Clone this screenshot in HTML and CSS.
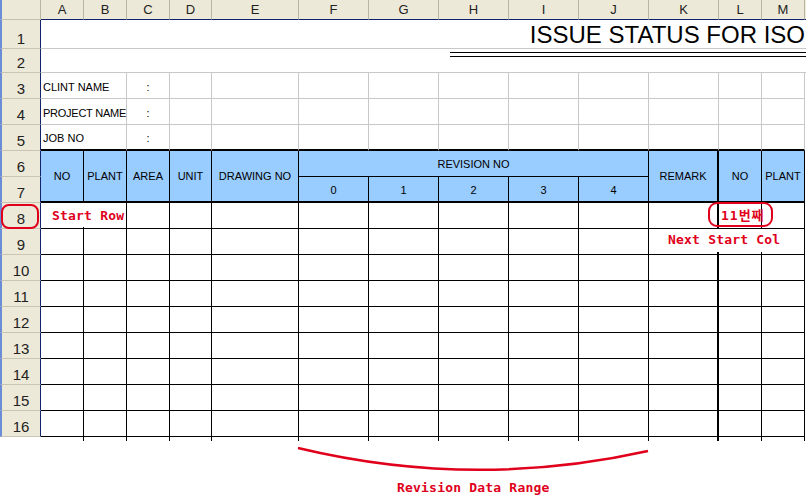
FILE: index.html
```html
<!DOCTYPE html>
<html lang="ko">
<head>
<meta charset="utf-8">
<title>ISSUE STATUS FOR ISO</title>
<link rel="stylesheet" href="styles.css">
</head>
<body>
<div class="sheet">
  <div class="grid">
    <div class="ch corner"></div>
    <div class="ch">A</div><div class="ch">B</div><div class="ch">C</div><div class="ch">D</div><div class="ch">E</div><div class="ch">F</div><div class="ch">G</div><div class="ch">H</div><div class="ch">I</div><div class="ch">J</div><div class="ch">K</div><div class="ch">L</div><div class="ch">M</div><div class="ch chn"></div>

    <div class="rh">1</div>
    <div class="title">ISSUE STATUS FOR ISO</div>

    <div class="rh">2</div>
    <div class="r2"><div class="dbl"></div></div>

    <div class="rh">3</div>
    <div class="g ab lbl">CLINT NAME</div><div class="g colon">:</div>
    <div class="g"></div><div class="g"></div><div class="g"></div><div class="g"></div><div class="g"></div><div class="g"></div><div class="g"></div><div class="g"></div><div class="g"></div><div class="g"></div><div class="n"></div>

    <div class="rh">4</div>
    <div class="g ab lbl tight">PROJECT NAME</div><div class="g colon">:</div>
    <div class="g"></div><div class="g"></div><div class="g"></div><div class="g"></div><div class="g"></div><div class="g"></div><div class="g"></div><div class="g"></div><div class="g"></div><div class="g"></div><div class="n"></div>

    <div class="rh">5</div>
    <div class="g b5 ab lbl">JOB NO</div><div class="g b5 colon">:</div>
    <div class="g b5"></div><div class="g b5"></div><div class="g b5"></div><div class="g b5"></div><div class="g b5"></div><div class="g b5"></div><div class="g b5"></div><div class="g b5"></div><div class="g b5"></div><div class="g b5"></div><div class="n"></div>

    <div class="rh">6</div>
    <div class="h tall">NO</div><div class="h tall">PLANT</div><div class="h tall">AREA</div><div class="h tall">UNIT</div><div class="h tall">DRAWING NO</div>
    <div class="h rev">REVISION NO</div>
    <div class="h tall k">REMARK</div><div class="h tall">NO</div><div class="h tall">PLANT</div><div class="n tall-n"></div>

    <div class="rh">7</div>
    <div class="h low">0</div><div class="h low">1</div><div class="h low">2</div><div class="h low">3</div><div class="h low">4</div>

    <div class="rh">8</div>
    <div class="d"></div><div class="d"></div><div class="d"></div><div class="d"></div><div class="d"></div><div class="d"></div><div class="d"></div><div class="d"></div><div class="d"></div><div class="d"></div><div class="d k"></div><div class="d"></div><div class="d"></div><div class="n"></div>
    <div class="rh">9</div>
    <div class="d"></div><div class="d"></div><div class="d"></div><div class="d"></div><div class="d"></div><div class="d"></div><div class="d"></div><div class="d"></div><div class="d"></div><div class="d"></div><div class="d k"></div><div class="d"></div><div class="d"></div><div class="n"></div>
    <div class="rh">10</div>
    <div class="d"></div><div class="d"></div><div class="d"></div><div class="d"></div><div class="d"></div><div class="d"></div><div class="d"></div><div class="d"></div><div class="d"></div><div class="d"></div><div class="d k"></div><div class="d"></div><div class="d"></div><div class="n"></div>
    <div class="rh">11</div>
    <div class="d"></div><div class="d"></div><div class="d"></div><div class="d"></div><div class="d"></div><div class="d"></div><div class="d"></div><div class="d"></div><div class="d"></div><div class="d"></div><div class="d k"></div><div class="d"></div><div class="d"></div><div class="n"></div>
    <div class="rh">12</div>
    <div class="d"></div><div class="d"></div><div class="d"></div><div class="d"></div><div class="d"></div><div class="d"></div><div class="d"></div><div class="d"></div><div class="d"></div><div class="d"></div><div class="d k"></div><div class="d"></div><div class="d"></div><div class="n"></div>
    <div class="rh">13</div>
    <div class="d"></div><div class="d"></div><div class="d"></div><div class="d"></div><div class="d"></div><div class="d"></div><div class="d"></div><div class="d"></div><div class="d"></div><div class="d"></div><div class="d k"></div><div class="d"></div><div class="d"></div><div class="n"></div>
    <div class="rh">14</div>
    <div class="d"></div><div class="d"></div><div class="d"></div><div class="d"></div><div class="d"></div><div class="d"></div><div class="d"></div><div class="d"></div><div class="d"></div><div class="d"></div><div class="d k"></div><div class="d"></div><div class="d"></div><div class="n"></div>
    <div class="rh">15</div>
    <div class="d"></div><div class="d"></div><div class="d"></div><div class="d"></div><div class="d"></div><div class="d"></div><div class="d"></div><div class="d"></div><div class="d"></div><div class="d"></div><div class="d k"></div><div class="d"></div><div class="d"></div><div class="n"></div>
    <div class="rh">16</div>
    <div class="d"></div><div class="d"></div><div class="d"></div><div class="d"></div><div class="d"></div><div class="d"></div><div class="d"></div><div class="d"></div><div class="d"></div><div class="d"></div><div class="d k"></div><div class="d"></div><div class="d"></div><div class="n"></div>

    <div class="n"></div>
    <div class="t"></div><div class="t"></div><div class="t"></div><div class="t"></div><div class="t"></div><div class="t"></div><div class="t"></div><div class="t"></div><div class="t"></div><div class="t"></div><div class="t k"></div><div class="t"></div><div class="t"></div><div class="n"></div>
  </div>

  <div class="rowmark"></div>
  <div class="ann start-row">Start Row</div>
  <div class="ann eleven">11번째</div>
  <div class="ann next-col">Next Start Col</div>
  <svg class="bracket" width="806" height="504" viewBox="0 0 806 504">
    <path d="M298 448 Q 473 490 648 451" fill="none" stroke="#e0001b" stroke-width="2.5"/>
  </svg>
  <div class="ann range">Revision Data Range</div>
</div>
</body>
</html>
```

FILE: styles.css
```css
* { box-sizing: border-box; }
html, body { margin: 0; padding: 0; background: #fff; }
body {
  width: 806px;
  height: 504px;
  overflow: hidden;
  font-family: "Liberation Sans", Arial, sans-serif;
  color: #000;
}
.sheet { position: relative; width: 806px; height: 504px; }

.grid {
  display: grid;
  grid-template-columns: 41px 43px 43px 43px 42px 87px 70px 70px 70px 70px 70px 70px 43px 43px 1fr;
  grid-template-rows: 20px 29px 24px repeat(14, 26px) 4px;
}

/* column headers */
.ch {
  background: #ece9d8;
  border-right: 1px solid #b9b5a3;
  border-bottom: 1px solid #12236e;
  font-size: 13px;
  line-height: 19px;
  text-align: center;
  color: #222;
}
.ch.corner {
  border-left: 2px solid #6b8cd6;
  border-bottom-color: #c4c0ae;
}
.ch.chn { border-right: none; }

/* row headers */
.rh {
  background: #ece9d8;
  border-left: 2px solid #6b8cd6;
  border-right: 1px solid #12236e;
  border-bottom: 1px solid #c9c5b4;
  display: flex;
  align-items: flex-end;
  justify-content: center;
  font-size: 15px;
  line-height: 17px;
  padding-bottom: 1px;
  color: #222;
}

/* title rows */
.title {
  grid-column: span 14;
  border-bottom: 1px solid #c8c8c8;
  display: flex;
  align-items: center;
  justify-content: flex-end;
  font-size: 24px;
  line-height: 24px;
  padding: 1px 1px 0 0;
  white-space: nowrap;
  overflow: hidden;
}
.r2 {
  grid-column: span 14;
  border-bottom: 1px solid #c8c8c8;
}
.dbl {
  margin: 3px 0 0 409px;
  height: 5px;
  border-top: 1px solid #000;
  border-bottom: 1px solid #000;
}

/* info rows */
.g {
  border-right: 1px solid #c8c8c8;
  border-bottom: 1px solid #c8c8c8;
}
.g.b5 { border-bottom: 2px solid #000; }
.ab { grid-column: span 2; }
.lbl, .colon {
  display: flex;
  align-items: flex-end;
  font-size: 11px;
  line-height: 13px;
  padding: 0 0 4px 2px;
  white-space: nowrap;
}
.lbl.tight { letter-spacing: -0.25px; }
.colon { justify-content: center; padding-left: 0; }

/* table header */
.h {
  background: #99ccff;
  border-right: 1px solid #000;
  border-bottom: 2px solid #000;
  display: flex;
  align-items: center;
  justify-content: center;
  font-size: 11px;
  white-space: nowrap;
  overflow: hidden;
}
.h.tall { grid-row: span 2; }
.h.rev { grid-column: span 5; border-bottom-width: 1px; }
.h.low { padding-top: 1px; }
.n.tall-n { grid-row: span 2; }
.h.k, .d.k, .t.k { border-right-width: 2px; }

/* data rows */
.d {
  border-right: 1px solid #000;
  border-bottom: 1px solid #000;
}
.t { border-right: 1px solid #000; }

/* annotations */
.rowmark {
  position: absolute;
  left: 1px;
  top: 204px;
  width: 38px;
  height: 25px;
  border: 2px solid #e0001b;
  border-radius: 8px;
}
.ann {
  position: absolute;
  font-family: "DejaVu Sans Mono", "Noto Sans CJK KR", monospace;
  font-weight: bold;
  font-size: 13px;
  letter-spacing: 0.2px;
  color: #e0001b;
  white-space: nowrap;
}
.start-row {
  left: 45px;
  top: 203px;
  width: 80px;
  height: 24px;
  padding: 4px 0 0 7px;
  line-height: 18px;
  background: #fff;
}
.eleven {
  left: 708px;
  top: 202px;
  width: 65px;
  height: 25px;
  border: 2px solid #e0001b;
  border-radius: 9px;
  display: flex;
  align-items: center;
  padding-left: 11px;
  letter-spacing: 1px;
}
.next-col {
  left: 665px;
  top: 229px;
  width: 115px;
  height: 23px;
  padding-left: 3px;
  line-height: 22px;
  background: #fff;
}
.bracket {
  position: absolute;
  left: 0;
  top: 0;
  pointer-events: none;
}
.range {
  left: 397px;
  top: 479px;
  line-height: 18px;
}
```
